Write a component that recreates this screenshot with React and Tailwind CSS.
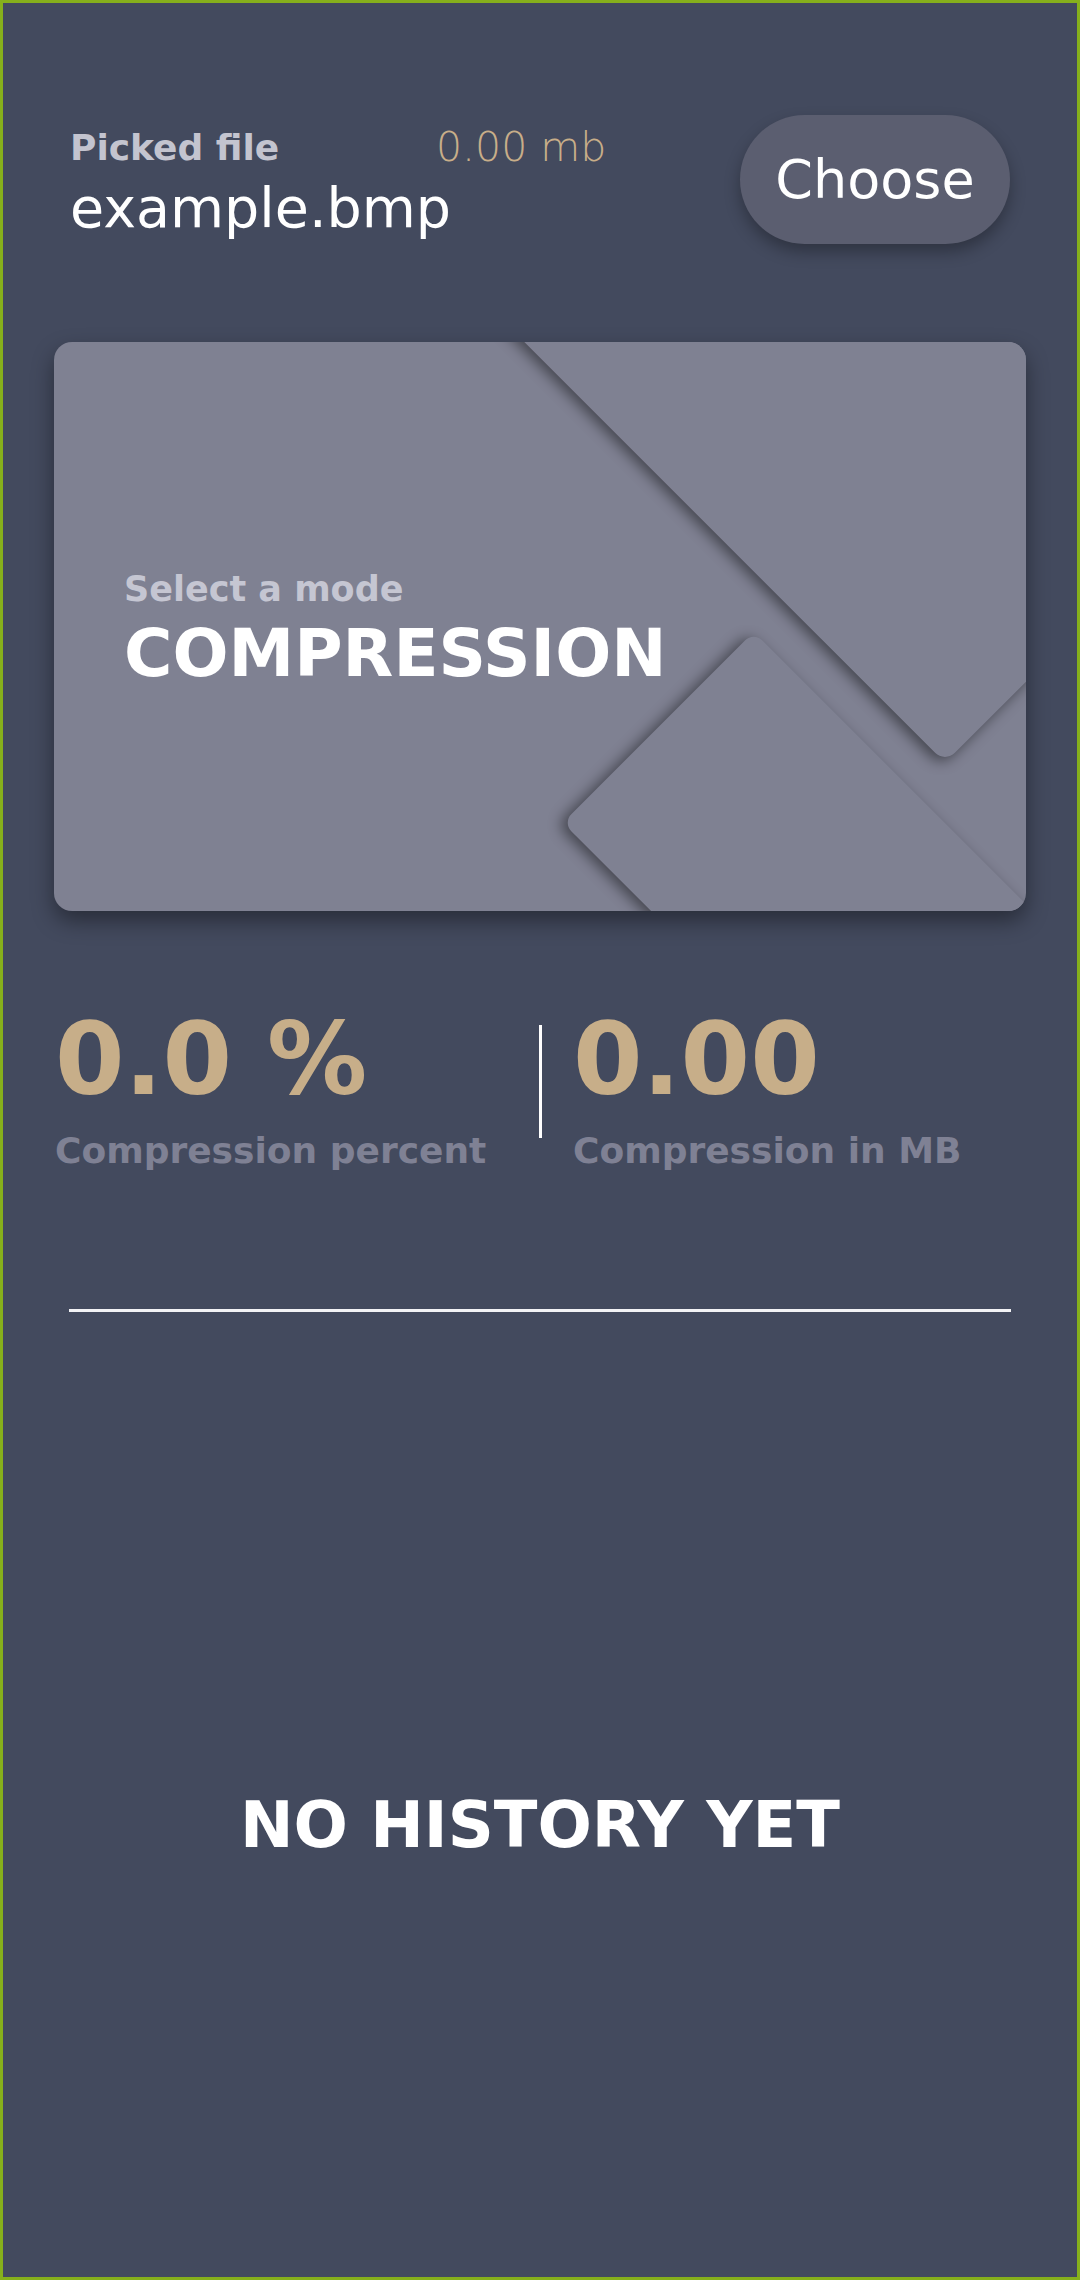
import React from 'react';

// Compression screen: picked file header, mode card, stats and history
export default function App() {
  return (
    <div className="w-[1080px] h-[2280px] bg-[#434a5e] border-[3px] border-[#86b01c] font-['DejaVu_Sans',sans-serif] overflow-hidden">
      {/* Header */}
      <div className="mt-[112px] pl-[67px] pr-[67px] flex items-center justify-between">
        <div className="flex flex-col pt-[4px]">
          <div className="flex items-center">
            <span className="w-[366px] text-[36px] leading-none font-bold text-[#c3c4cf]">Picked file</span>
            <span className="text-[41px] leading-none font-extralight text-[#c8ae89]">0.00 mb</span>
          </div>
          <span className="mt-[12px] text-[55.5px] leading-none font-normal text-white">example.bmp</span>
        </div>
        <button className="w-[270px] h-[129px] rounded-full bg-[#5b5e70] text-white text-[54px] font-normal shadow-[0_8px_16px_rgba(0,0,0,0.3)]">
          Choose
        </button>
      </div>

      {/* Mode card */}
      <div className="mt-[98px] mx-[51px] h-[569px] relative overflow-hidden rounded-[18px] bg-[#7f8192] shadow-[0_10px_22px_rgba(0,0,0,0.4)]">
        <div className="absolute left-[491px] top-[-545px] w-[800px] h-[800px] rotate-45 rounded-[14px] bg-[#7f8192] shadow-[0_6px_14px_rgba(0,0,0,0.45)]" />
        <div className="absolute left-[531px] top-[427px] w-[500px] h-[270px] rotate-45 rounded-[12px] bg-[#7f8192] shadow-[-3px_6px_14px_rgba(0,0,0,0.45)]" />
        <div className="relative z-10 h-full flex flex-col justify-center pl-[70px] pt-[6px]">
          <span className="text-[35px] leading-none font-bold text-[#c5c6d2]">Select a mode</span>
          <span className="mt-[14px] text-[66px] leading-none font-bold text-white">COMPRESSION</span>
        </div>
      </div>

      {/* Stats */}
      <div className="mt-[99px] ml-[52px] flex items-start">
        <div className="w-[484px] flex flex-col">
          <span className="text-[100px] leading-none font-bold text-[#c7ae89]">0.0 %</span>
          <span className="mt-[23px] text-[36px] leading-none font-bold text-[#7f8194]">Compression percent</span>
        </div>
        <div className="mt-[15px] w-[3px] h-[113px] bg-white" />
        <div className="pl-[31px] flex flex-col">
          <span className="text-[100px] leading-none font-bold text-[#c7ae89]">0.00</span>
          <span className="mt-[23px] text-[36px] leading-none font-bold text-[#7f8194]">Compression in MB</span>
        </div>
      </div>

      <div className="mt-[140px] mx-[66px] h-[3px] bg-[#f2f2f5]" />

      {/* History */}
      <div className="mt-[481px] text-center text-[64px] leading-none font-bold text-white">NO HISTORY YET</div>
    </div>
  );
}
